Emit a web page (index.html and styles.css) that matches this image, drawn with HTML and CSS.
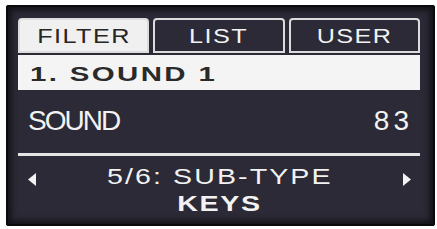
FILE: index.html
```html
<!doctype html>
<html lang="en">
<head>
    <meta charset="UTF-8">
    <title>Browser display</title>
    <link rel="stylesheet" href="styles.css">
</head>
<body>

<div class="display">
    <div class="tabs">
        <div class="tab active"><span class="wide">FILTER</span></div>
        <div class="tab"><span class="wide">LIST</span></div>
        <div class="tab"><span class="wide">USER</span></div>
    </div>

    <div class="preset"><span class="wide">1. SOUND 1</span></div>

    <div class="param">
        <span class="param_name">SOUND</span>
        <span class="param_value">83</span>
    </div>

    <div class="separator"></div>

    <div class="footer">
        <div class="nav">
            <svg class="arrow" width="8" height="13" viewBox="0 0 8 13"><polygon points="8,0 8,13 0,6.5" fill="#f2f2f2"/></svg>
            <span class="nav_title wide">5/6: SUB-TYPE</span>
            <svg class="arrow" width="8" height="13" viewBox="0 0 8 13"><polygon points="0,0 0,13 8,6.5" fill="#f2f2f2"/></svg>
        </div>
        <div class="nav_value"><span class="wide">KEYS</span></div>
    </div>
</div>

</body>
</html>
```

FILE: styles.css
```css
body {
    margin: 0;
    background: #ffffff;
    font-family: "Liberation Sans", Arial, sans-serif;
}

/* display font is a wide pixel face, stretch the regular one */
.wide {
    display: inline-block;
    transform: scaleX(1.3);
}

.display {
    box-sizing: border-box;
    width: 429px;
    height: 221px;
    margin: 5px 0 0 6px;
    padding: 13px 15px 0 12px;
    background: #2b2a36;
    border-radius: 3px;
    box-shadow: inset 0 0 0 2px #0b0b0e, inset 0 0 6px 5px #111116;
    color: #f2f2f2;
}

.tabs {
    display: flex;
    gap: 4px;
    height: 35px;
}
.tab {
    flex: 1;
    box-sizing: border-box;
    display: flex;
    align-items: center;
    justify-content: center;
    border: 2px solid #dcdcdc;
    border-radius: 4px 4px 0 0;
    font-size: 21px;
    letter-spacing: 1.2px;
    color: #f2f2f2;
}
.tab .wide {
    transform: scaleX(1.2);
}
.tab.active {
    background: #f0f0f0;
    color: #262626;
}

.preset {
    margin-top: 2px;
    height: 35px;
    line-height: 38px;
    overflow: hidden;
    padding-left: 12px;
    background: #f4f4f4;
    color: #2a2a2a;
    font-weight: bold;
    font-size: 21px;
    letter-spacing: 1.7px;
}
.preset .wide {
    transform: scaleX(1.4);
    transform-origin: left;
}

.param {
    box-sizing: border-box;
    height: 63px;
    padding: 17px 11px 0 10px;
    display: flex;
    justify-content: space-between;
    font-size: 28px;
    line-height: 28px;
}
.param_name {
    letter-spacing: -2px;
}
.param_value {
    letter-spacing: 4px;
    margin-right: -4px;
}

.separator {
    height: 3px;
    background: #e4e4e4;
}

.footer {
    padding: 10px 9px 0 10px;
}
.nav {
    display: flex;
    justify-content: space-between;
    align-items: center;
    height: 22px;
}
.arrow {
    display: block;
    margin-top: 4px;
}
.nav_title {
    font-size: 22px;
    line-height: 22px;
    letter-spacing: 1.6px;
}
.nav_value {
    margin-top: 5px;
    text-align: center;
    font-size: 22px;
    line-height: 22px;
    font-weight: bold;
    letter-spacing: 1.3px;
}
```
